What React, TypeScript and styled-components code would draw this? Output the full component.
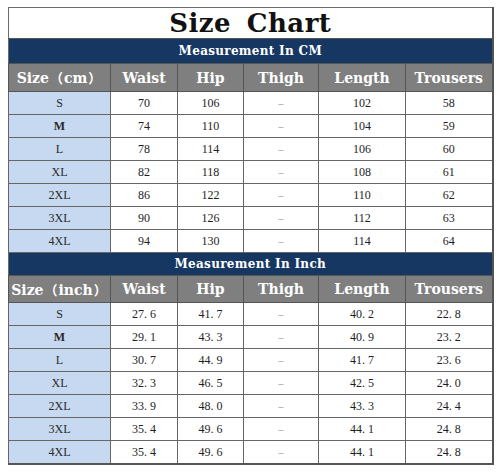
import styled, { createGlobalStyle } from "styled-components";

const GlobalStyle = createGlobalStyle`
  html, body {
    margin: 0;
    padding: 0;
    background: #ffffff;
  }
`;

const Page = styled.div`
  padding: 7px 0 0 8px;
  width: 500px;
  height: 474px;
  box-sizing: border-box;
`;

const Chart = styled.table`
  width: 484px;
  table-layout: fixed;
  border-collapse: collapse;
  border: 1px solid #6b6b6b;
  border-right: 2px solid #555;
  border-bottom: 2px solid #555;
`;

const Title = styled.th`
  height: 30px;
  padding: 0;
  font-family: "DejaVu Serif", "Liberation Serif", serif;
  font-weight: bold;
  font-size: 26px;
  letter-spacing: 0.5px;
  color: #111;
  background: #fff;
  border-bottom: 1px solid #555;
  word-spacing: 6px;
`;

const Band = styled.th<{ $h: number }>`
  height: ${(p) => p.$h}px;
  padding: 0;
  background: #173763;
  color: #fff;
  font-family: "DejaVu Serif", "Liberation Serif", serif;
  font-weight: bold;
  font-size: 12px;
  letter-spacing: 0.3px;
  border-bottom: 1px solid #555;
`;

const Head = styled.th<{ $h: number }>`
  height: ${(p) => p.$h}px;
  padding: 0;
  background: #7f7f7f;
  color: #fff;
  font-family: "DejaVu Serif", "Liberation Serif", serif;
  font-weight: bold;
  font-size: 14px;
  white-space: nowrap;
  border: 1px solid #555;
`;

const Paren = styled.span`
  font-family: "Noto Sans CJK SC", sans-serif;
  font-weight: bold;
  font-size: 13px;
  margin: 0 1px;
`;

const Cell = styled.td<{ $size?: boolean; $h: number }>`
  height: ${(p) => p.$h}px;
  padding: 0;
  text-align: center;
  font-family: "Liberation Serif", serif;
  font-size: 12px;
  color: #1e1e1e;
  background: ${(p) => (p.$size ? "#c6d9f0" : "#fff")};
  border: 1px solid #666;
`;

const SizeLabel = styled.span<{ $heavy?: boolean }>`
  font-family: "Liberation Serif", serif;
  font-size: 12px;
  font-weight: ${(p) => (p.$heavy ? "bold" : "normal")};
  color: #2a2a2a;
`;

const Dash = styled.span`
  color: #888;
  font-size: 10px;
`;

const cols = [102, 67, 66, 75, 87, 87];
const heads = ["Waist", "Hip", "Thigh", "Length", "Trousers"];

const cm = [
  ["S", "70", "106", "102", "58"],
  ["M", "74", "110", "104", "59"],
  ["L", "78", "114", "106", "60"],
  ["XL", "82", "118", "108", "61"],
  ["2XL", "86", "122", "110", "62"],
  ["3XL", "90", "126", "112", "63"],
  ["4XL", "94", "130", "114", "64"],
];

const inch = [
  ["S", "27. 6", "41. 7", "40. 2", "22. 8"],
  ["M", "29. 1", "43. 3", "40. 9", "23. 2"],
  ["L", "30. 7", "44. 9", "41. 7", "23. 6"],
  ["XL", "32. 3", "46. 5", "42. 5", "24. 0"],
  ["2XL", "33. 9", "48. 0", "43. 3", "24. 4"],
  ["3XL", "35. 4", "49. 6", "44. 1", "24. 8"],
  ["4XL", "35. 4", "49. 6", "44. 1", "24. 8"],
];

const Section = ({
  label,
  unit,
  rows,
  bandH,
  headH,
  rowH,
}: {
  label: string;
  unit: string;
  rows: string[][];
  bandH: number;
  headH: number;
  rowH: number;
}) => (
  <>
    <tr>
      <Band colSpan={6} $h={bandH}>
        {label}
      </Band>
    </tr>
    <tr>
      <Head $h={headH}>
        Size<Paren>（</Paren>{unit}<Paren>）</Paren>
      </Head>
      {heads.map((h) => (
        <Head key={h} $h={headH}>
          {h}
        </Head>
      ))}
    </tr>
    {rows.map((r) => (
      <tr key={r[0]}>
        <Cell $size $h={rowH}>
          <SizeLabel $heavy={r[0] === "M"}>{r[0]}</SizeLabel>
        </Cell>
        <Cell $h={rowH}>{r[1]}</Cell>
        <Cell $h={rowH}>{r[2]}</Cell>
        <Cell $h={rowH}>
          <Dash>–</Dash>
        </Cell>
        <Cell $h={rowH}>{r[3]}</Cell>
        <Cell $h={rowH}>{r[4]}</Cell>
      </tr>
    ))}
  </>
);

export default function App() {
  return (
    <>
      <GlobalStyle />
      <Page>
        <Chart>
          <colgroup>
            {cols.map((w, i) => (
              <col key={i} style={{ width: w }} />
            ))}
          </colgroup>
          <tbody>
            <tr>
              <Title colSpan={6}>Size Chart</Title>
            </tr>
            <Section label="Measurement In CM" unit="cm" rows={cm} bandH={24} headH={27} rowH={22} />
            <Section label="Measurement In Inch" unit="inch" rows={inch} bandH={22} headH={26} rowH={22} />
          </tbody>
        </Chart>
      </Page>
    </>
  );
}
